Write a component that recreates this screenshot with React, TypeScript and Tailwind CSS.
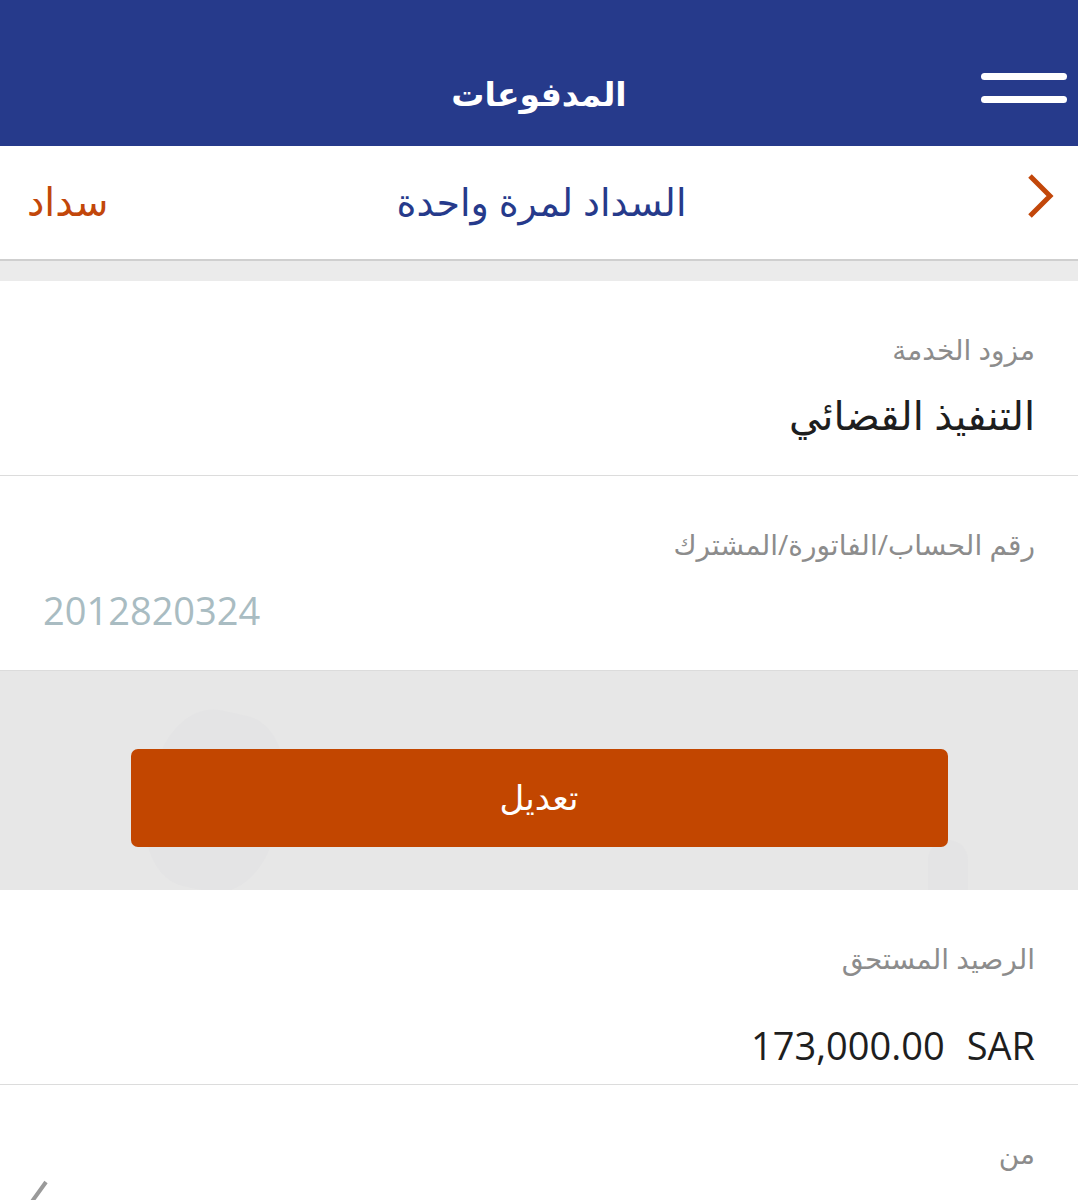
const font = 'font-["Open_Sans","DejaVu_Sans",sans-serif]';

function Field({ label, gap = 'mt-[24px]', children }: { label: string; gap?: string; children: React.ReactNode }) {
  return (
    <div className="flex h-[195px] flex-col border-b border-[#dcdcdc] bg-white px-[43px]">
      <div className="mt-[50px] text-right text-[28px] leading-[36px] text-[#8c8c8c]">{label}</div>
      <div className={gap}>{children}</div>
    </div>
  );
}

export default function App() {
  return (
    <div dir="rtl" className={`${font} w-[1078px] h-[1200px] overflow-hidden bg-white`}>
      {/* top bar */}
      <header className="relative flex h-[146px] items-center justify-center bg-[#263a8b] pt-[40px]">
        <h1 className="text-[33px] font-bold leading-none text-white">المدفوعات</h1>
        <button className="absolute right-[11px] top-[73px] flex flex-col gap-[16px]">
          <span className="block h-[7px] w-[86px] rounded-full bg-white" />
          <span className="block h-[7px] w-[86px] rounded-full bg-white" />
        </button>
      </header>

      {/* sub header */}
      <div className="grid h-[115px] grid-cols-[1fr_auto_1fr] items-center border-b-2 border-[#cfcfcf] bg-white pl-[27px] pr-[22px]">
        <svg width="30" height="46" viewBox="0 0 30 46" className="mt-[-14px]" fill="none">
          <path d="M4 3 L24 23 L4 43" stroke="#c2470a" strokeWidth="5" />
        </svg>
        <span className="mt-[-4px] text-[38px] leading-none text-[#263a8b]">السداد لمرة واحدة</span>
        <span className="mt-[-4px] justify-self-end text-[39px] leading-none text-[#c2470a]">سداد</span>
      </div>
      <div className="h-[20px] bg-[#ebebeb]" />

      <Field label="مزود الخدمة">
        <div className="text-right text-[40px] leading-[48px] text-[#1e1e1e]">التنفيذ القضائي</div>
      </Field>
      <Field label="رقم الحساب/الفاتورة/المشترك">
        <div dir="ltr" className="text-left text-[38px] leading-[48px] text-[#a9bcc2]">2012820324</div>
      </Field>

      {/* action area */}
      <div className="relative flex h-[219px] items-center justify-center overflow-hidden bg-[#e7e7e7]">
        <div className="absolute left-[150px] top-[40px] h-[180px] w-[130px] rotate-12 rounded-[40%] bg-[#e4e4e5]" />
        <div className="absolute right-[110px] bottom-[-20px] h-[70px] w-[40px] rounded-full bg-[#e4e4e5]" />
        <button className="relative mt-[34px] h-[98px] w-[817px] rounded-[7px] bg-[#c24600] text-[34px] text-white">
          تعديل
        </button>
      </div>

      <Field label="الرصيد المستحق" gap="mt-[45px]">
        <div dir="ltr" className="flex justify-end gap-[22px] text-[38px] leading-[48px] text-[#1e1e1e]">
          <span>173,000.00</span>
          <span>SAR</span>
        </div>
      </Field>

      <div className="relative h-[120px] bg-white px-[43px] pt-[50px]">
        <div className="text-right text-[28px] leading-[36px] text-[#8c8c8c]">من</div>
        <svg width="30" height="46" viewBox="0 0 30 46" className="absolute left-[22px] top-[94px]" fill="none">
          <path d="M24 3 L6 28 L24 43" stroke="#9a9a9a" strokeWidth="4" />
        </svg>
      </div>
    </div>
  );
}
